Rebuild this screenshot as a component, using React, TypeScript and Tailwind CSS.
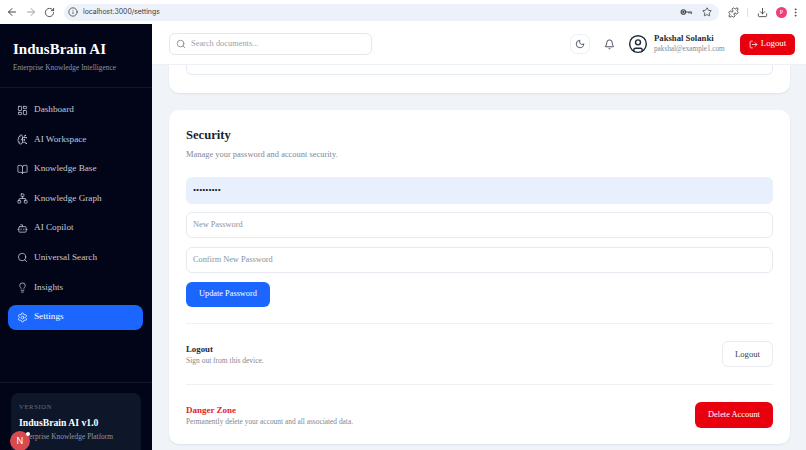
import {
  ArrowLeft,
  ArrowRight,
  Bell,
  BookOpen,
  Bot,
  BrainCircuit,
  CircleUser,
  Download,
  EllipsisVertical,
  Info,
  LayoutDashboard,
  Lightbulb,
  LogOut,
  Moon,
  Network,
  Puzzle,
  RotateCw,
  Search,
  Settings,
  Star,
} from "lucide-react";

const NAV_ITEMS = [
  { label: "Dashboard", icon: LayoutDashboard },
  { label: "AI Workspace", icon: BrainCircuit },
  { label: "Knowledge Base", icon: BookOpen },
  { label: "Knowledge Graph", icon: Network },
  { label: "AI Copilot", icon: Bot },
  { label: "Universal Search", icon: Search },
  { label: "Insights", icon: Lightbulb },
  { label: "Settings", icon: Settings, active: true },
];

const serif = "font-['Liberation_Serif','Times_New_Roman',serif]";

function BrowserBar() {
  return (
    <div className="flex h-[24px] shrink-0 items-center bg-white pl-[6px] pr-[1px] text-[#474747]">
      <div className="flex w-[58px] items-center gap-[7px]">
        <ArrowLeft size={12} />
        <ArrowRight size={12} className="text-[#a0a0a0]" />
        <RotateCw size={11} />
      </div>
      <div className="flex h-[17px] w-[655px] items-center justify-between rounded-full bg-[#edf2fa] pl-[4px] pr-[7px]">
        <div className="flex items-center gap-[5px]">
          <Info size={10} />
          <span className="font-['Inter',sans-serif] text-[6.9px] text-[#3c3c3c]">localhost:3000/settings</span>
        </div>
        <div className="flex items-center gap-[10px]">
          <svg width="12" height="8" viewBox="0 0 16 10" fill="none" stroke="currentColor" strokeWidth="1.5">
            <circle cx="4.5" cy="5" r="3" />
            <circle cx="4.5" cy="5" r="0.8" />
            <path d="M7.5 5H15V7.5M12 5V7" />
          </svg>
          <Star size={10} />
        </div>
      </div>
      <div className="ml-[9px] flex items-center">
        <Puzzle size={11} />
        <div className="ml-[8px] h-[9px] w-px bg-[#e0e0e0]" />
        <Download size={11} className="ml-[9px]" />
        <div className="ml-[8px] flex h-[11px] w-[11px] items-center justify-center rounded-full bg-[#ec407a] text-[6px] text-white">
          P
        </div>
        <EllipsisVertical size={11} className="ml-[3px]" />
      </div>
    </div>
  );
}

function Sidebar() {
  return (
    <aside className="relative flex w-[152px] shrink-0 flex-col overflow-hidden bg-[#020418]">
      <div className="h-[64px] shrink-0 border-b border-[#12172a] pl-[13px] pt-[15px]">
        <h1 className="text-[15px] leading-[20px] font-bold text-white">IndusBrain AI</h1>
        <p className="mt-[3px] whitespace-nowrap text-[7.4px] leading-[11px] text-[#8c94a8]">Enterprise Knowledge Intelligence</p>
      </div>
      <nav className="mt-[9.5px] flex flex-col gap-[4.6px] pl-[8px] pr-[9px]">
        {NAV_ITEMS.map(({ label, icon: Icon, active }) => (
          <div
            key={label}
            className={`flex h-[25px] items-center gap-[6px] rounded-[8px] pl-[9px] text-[9.2px] ${
              active ? "bg-[#1a66ff] text-white" : "text-[#c4c9d6]"
            }`}
          >
            <Icon size={11} strokeWidth={1.6} className={active ? "text-white" : "text-[#d5d9e3]"} />
            {label}
          </div>
        ))}
      </nav>
      <div className="mt-auto border-t border-[#12172a] px-[11px] pt-[10px]">
        <div className="h-[57px] rounded-t-[8px] bg-[#0e1729] pl-[8px] pt-[9px]">
          <p className="text-[6.6px] leading-[9px] tracking-[0.1em] text-[#667085]">VERSION</p>
          <p className="mt-[5px] text-[9.7px] leading-[13px] font-bold text-white">IndusBrain AI v1.0</p>
          <p className="mt-[2px] whitespace-nowrap text-[7.4px] leading-[11px] text-[#8c94a8]">Enterprise Knowledge Platform</p>
        </div>
      </div>
      <div className="absolute bottom-[-1px] left-[10px] flex h-[20px] w-[20px] items-center justify-center rounded-full bg-[#d84a4f] font-['Inter',sans-serif] text-[9px] font-normal text-white">
        N
        <span className="absolute right-[0px] top-[1px] h-[4px] w-[4px] rounded-full bg-white" />
      </div>
    </aside>
  );
}

function TopBar() {
  return (
    <header className="flex h-[41px] shrink-0 items-center justify-between border-b border-[#edf0f5] bg-white pl-[17px] pr-[11px]">
      <div className="flex h-[22px] w-[203px] items-center gap-[5px] rounded-[6px] border border-[#e4e7ec] pl-[6px]">
        <Search size={10} className="text-[#7b8494]" />
        <span className="pt-px text-[8.4px] text-[#9aa1ad]">Search documents...</span>
      </div>
      <div className="flex items-center">
        <div className="flex h-[20px] w-[20px] items-center justify-center rounded-[7px] border border-[#eef0f4] text-[#374151]">
          <Moon size={10} />
        </div>
        <Bell size={11} className="ml-[14px] text-[#374151]" />
        <CircleUser size={20} strokeWidth={1.7} className="ml-[13px] text-[#1f2937]" />
        <div className="ml-[6px] w-[86px]">
          <p className="text-[8.7px] leading-[11px] font-bold text-[#1f2937]">Pakshal Solanki</p>
          <p className="text-[7.2px] leading-[11px] text-[#7f8794]">pakshal@example1.com</p>
        </div>
        <button
          type="button"
          className="flex h-[21px] w-[55px] items-center justify-center gap-[3px] rounded-[5px] bg-[#e8000f] text-[8.8px] text-white"
        >
          <LogOut size={9} />
          Logout
        </button>
      </div>
    </header>
  );
}

function PasswordField({ placeholder }: { placeholder: string }) {
  return (
    <div className="flex h-[26px] items-center rounded-[6px] border border-[#e7eaf0] pl-[6px] text-[8.3px] text-[#8b929e]">
      {placeholder}
    </div>
  );
}

function SecurityCard() {
  return (
    <section className="mt-[17px] h-[334px] rounded-[10px] bg-white px-[17px] pt-[16px] shadow-[0_1px_2px_rgba(16,24,40,0.08)]">
      <h2 className="text-[12.6px] leading-[18px] font-bold text-[#1a2230]">Security</h2>
      <p className="mt-[4px] text-[8.45px] leading-[12px] text-[#7f8794]">Manage your password and account security.</p>
      <div className="mt-[17px] flex flex-col">
        <div className="flex h-[27px] items-center rounded-[6px] bg-[#e8f0fe] pl-[7px] text-[8.8px] text-[#111827]">
          •••••••••
        </div>
        <div className="mt-[8px]">
          <PasswordField placeholder="New Password" />
        </div>
        <div className="mt-[9px]">
          <PasswordField placeholder="Confirm New Password" />
        </div>
      </div>
      <button
        type="button"
        className="mt-[9px] h-[25px] w-[84px] rounded-[6px] bg-[#1a66ff] text-[8.3px] text-white"
      >
        Update Password
      </button>
      <div className="mt-[16px] flex h-[62px] items-center justify-between border-y border-[#eef0f4]">
        <div>
          <p className="text-[8.8px] leading-[12px] font-bold text-[#1f2937]">Logout</p>
          <p className="text-[7.5px] leading-[11px] text-[#7f8794]">Sign out from this device.</p>
        </div>
        <button
          type="button"
          className="h-[26px] w-[51px] rounded-[6px] border border-[#e9ebf0] text-[8.6px] text-[#374151]"
        >
          Logout
        </button>
      </div>
      <div className="flex h-[60px] items-center justify-between">
        <div>
          <p className="text-[9px] leading-[12px] font-bold text-[#e11d2e]">Danger Zone</p>
          <p className="text-[7.4px] leading-[11px] text-[#7f8794]">Permanently delete your account and all associated data.</p>
        </div>
        <button type="button" className="h-[26px] w-[78px] rounded-[6px] bg-[#e8000f] text-[8.4px] text-white">
          Delete Account
        </button>
      </div>
    </section>
  );
}

export default function App() {
  return (
    <div className={`flex h-[450px] w-[806px] flex-col overflow-hidden bg-[#f0f4f9] ${serif}`}>
      <BrowserBar />
      <div className="flex min-h-0 flex-1">
        <Sidebar />
        <div className="flex min-w-0 flex-1 flex-col">
          <TopBar />
          <main className="min-h-0 flex-1 overflow-hidden pl-[17px] pr-[16px]">
            <div className="h-[28px] rounded-b-[10px] bg-white px-[17px] shadow-[0_1px_2px_rgba(16,24,40,0.08)]">
              <div className="h-[10px] rounded-b-[6px] border border-t-0 border-[#e7eaf0]" />
            </div>
            <SecurityCard />
          </main>
        </div>
      </div>
    </div>
  );
}
